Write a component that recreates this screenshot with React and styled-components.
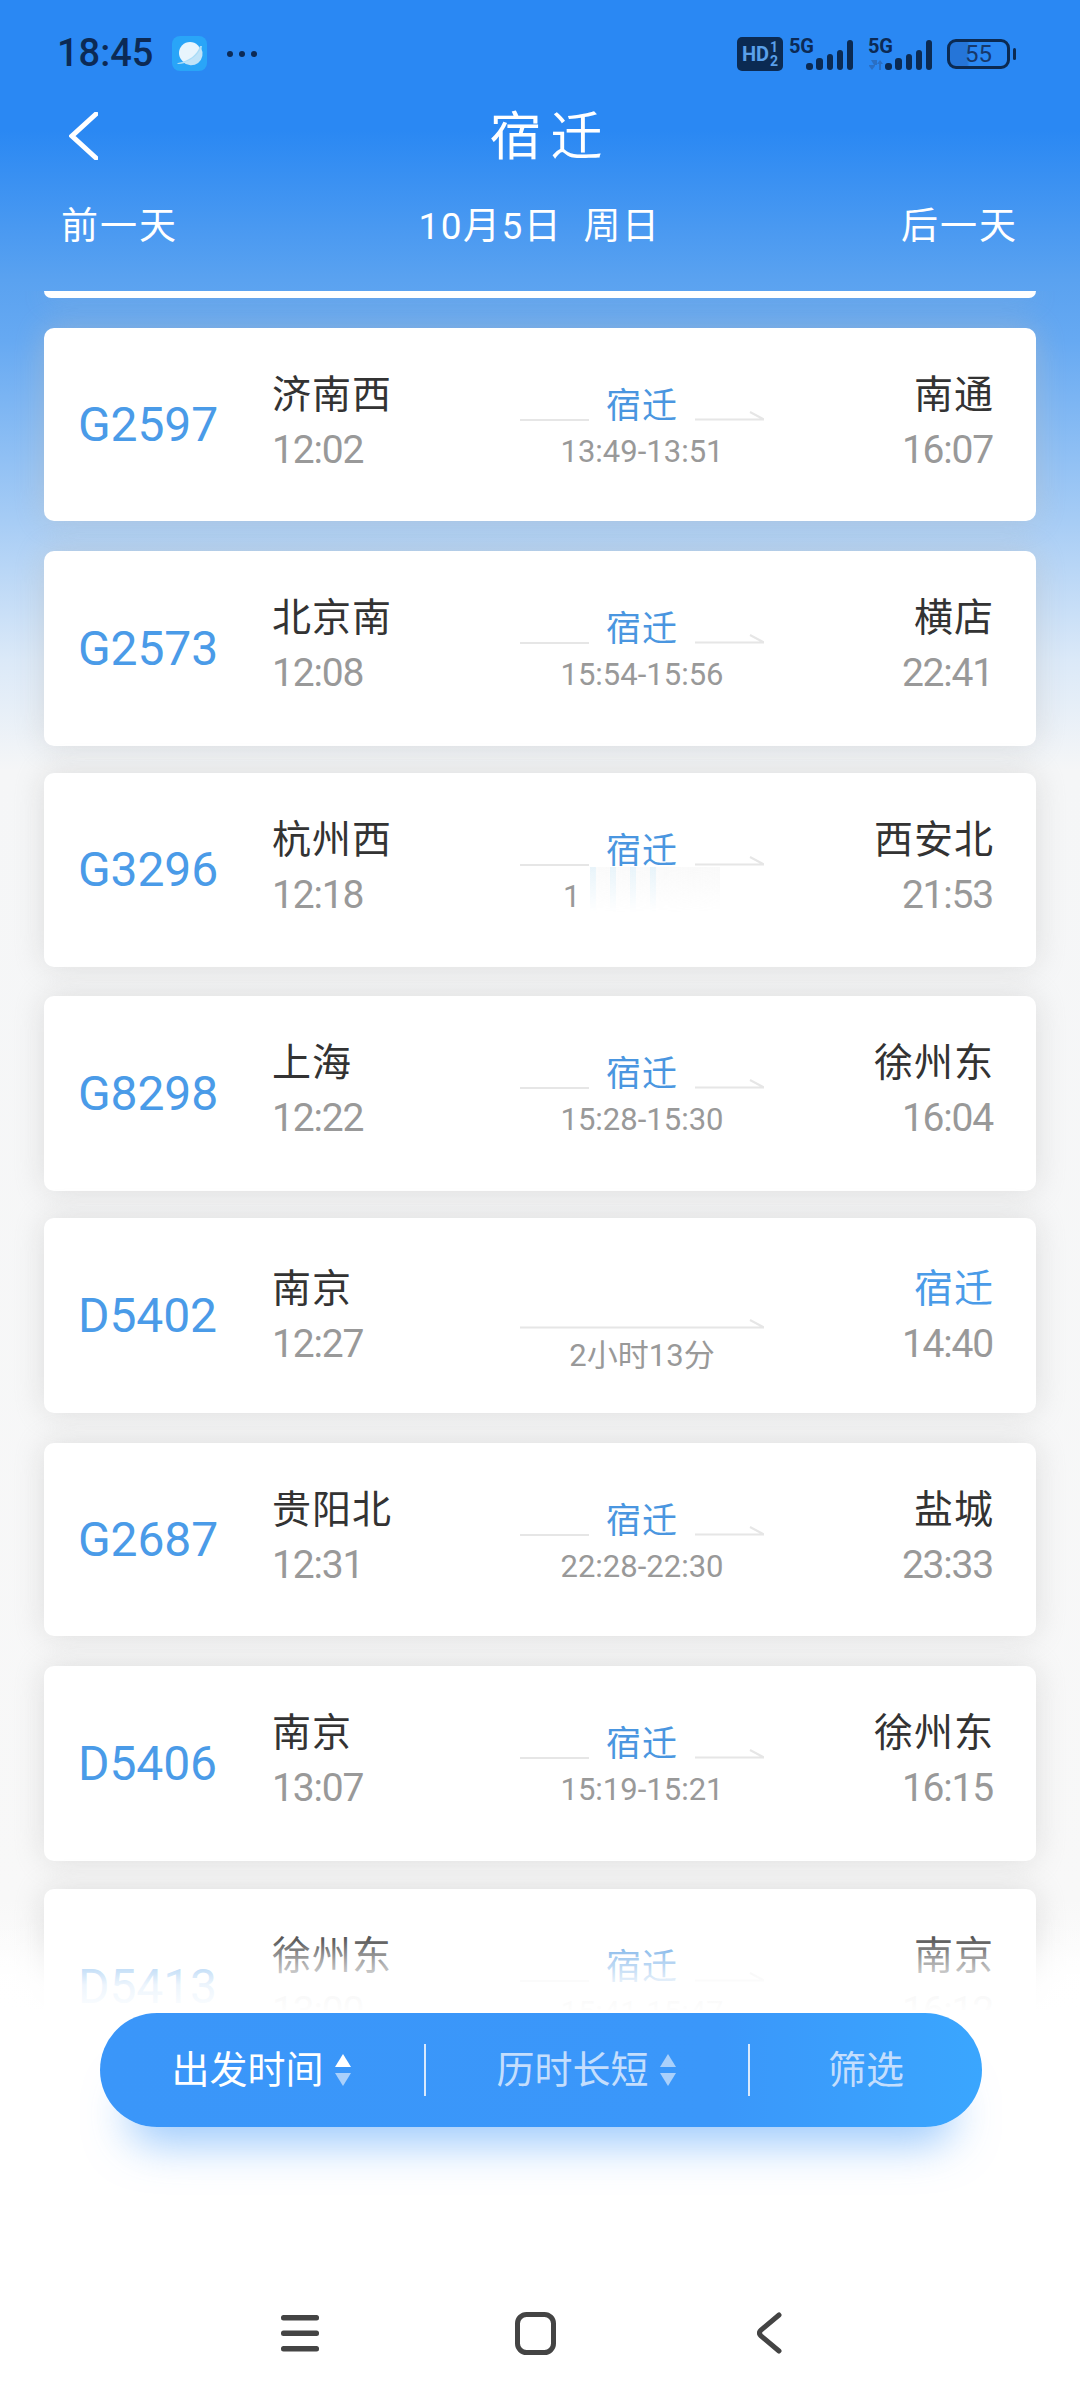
import styled, { createGlobalStyle } from "styled-components";

const FONT = `Roboto, "Noto Sans CJK SC", sans-serif`;

const Global = createGlobalStyle`
  html, body { margin: 0; padding: 0; background: #fff; }
  body { font-family: ${FONT}; }
`;

const Page = styled.div`
  width: 1080px;
  height: 2400px;
  overflow: hidden;
  display: flex;
  flex-direction: column;
  background: linear-gradient(
    to bottom,
    #2a88f3 0,
    #2a88f3 130px,
    #5aa2f0 280px,
    #66a9f2 340px,
    #a6ccf5 520px,
    #dbe9f8 660px,
    #f5f6f7 770px,
    #f8f8f8 1900px,
    #ffffff 2010px
  );
`;

/* status bar */
const StatusBar = styled.div`
  height: 106px;
  padding: 36px 70px 0 57px;
  box-sizing: border-box;
  display: flex;
  justify-content: space-between;
  align-items: flex-start;
  color: #0c2a55;
`;

const StatusLeft = styled.div`
  display: flex;
  align-items: center;
  gap: 19px;
  height: 35px;
`;

const Clock = styled.span`
  font-size: 38px;
  font-weight: 500;
  line-height: 35px;
`;

const StatusRight = styled.div`
  display: flex;
  align-items: flex-start;
`;

const HdBadge = styled.div`
  width: 46px;
  height: 34px;
  margin-top: 1px;
  margin-right: 6px;
  border-radius: 5px;
  background: #0b2a52;
  color: #5aa0ea;
  display: flex;
  align-items: center;
  justify-content: center;
  font-size: 20px;
  font-weight: 700;
`;

const HdFraction = styled.span`
  display: flex;
  flex-direction: column;
  font-size: 14px;
  line-height: 14px;
  margin-left: 1px;
`;

const Signal = styled.div`
  position: relative;
  width: 65px;
  height: 36px;
  margin-right: 14px;
`;

const SignalLabel = styled.span`
  position: absolute;
  left: 0;
  top: 0;
  font-size: 20px;
  font-weight: 700;
  line-height: 20px;
  letter-spacing: -0.3px;
`;

const Battery = styled.div`
  position: relative;
  width: 63px;
  height: 30px;
  margin-top: 3px;
  box-sizing: border-box;
  border: 3px solid #0b2a52;
  border-radius: 9px;
  background: linear-gradient(to right, #2575d8 0, #2575d8 30%, transparent 34%);
  display: flex;
  align-items: center;
  justify-content: center;
  font-size: 24px;
  line-height: 24px;
  color: #16386b;
  &::after {
    content: "";
    position: absolute;
    right: -9px;
    top: 6px;
    width: 3px;
    height: 12px;
    border-radius: 2px;
    background: #0b2a52;
  }
`;

const SignalGraphic = ({ arrows }) => (
  <svg width="65" height="36" viewBox="0 0 65 36">
    <g fill="#0b2a52">
      <rect x="17" y="27" width="7" height="7" rx="3" />
      <rect x="27" y="22" width="7" height="12" rx="3" />
      <rect x="38" y="18" width="6" height="16" rx="3" />
      <rect x="48" y="14" width="6" height="20" rx="3" />
      <rect x="58" y="4" width="6" height="30" rx="3" />
    </g>
    {arrows && (
      <g fill="#2a6fc4">
        <path d="M3 24 h6 v5 h-3 z M1 29 h6 v1 l-3 4 l-3 -4 z" />
        <path d="M12 24 l3 4 h-2 v6 h-2 v-6 h-2 z" />
      </g>
    )}
  </svg>
);

/* title + date */
const TitleBar = styled.div`
  height: 60px;
  padding: 0 0 0 69px;
  display: flex;
  align-items: center;
`;

const Title = styled.h1`
  margin: 3px 63px 0 -14px;
  flex: 1;
  text-align: center;
  color: #fff;
  font-size: 52px;
  font-weight: 400;
  letter-spacing: 9px;
  line-height: 60px;
`;

const DateRow = styled.div`
  height: 125px;
  padding: 38px 62px 0 61px;
  box-sizing: border-box;
  display: flex;
  justify-content: space-between;
  align-items: flex-start;
  color: #fff;
  font-size: 37px;
  line-height: 46px;
  letter-spacing: 2px;
`;

const DateText = styled.span`
  letter-spacing: 1.5px;
  white-space: pre;
`;

/* list */
const List = styled.div`
  position: relative;
  height: 1719px;
  overflow: hidden;
  padding: 0 44px;
  display: flex;
  flex-direction: column;
`;

const CardStub = styled.div`
  height: 7px;
  flex: none;
  background: #fff;
  border-radius: 0 0 8px 8px;
  box-shadow: 0 0 30px rgba(190, 190, 190, 0.45);
  margin-bottom: 30px;
`;

const Card = styled.div`
  flex: none;
  height: ${(p) => p.$height}px;
  margin-bottom: ${(p) => p.$gap}px;
  background: #fff;
  border-radius: 10px;
  box-shadow: 0 0 30px rgba(190, 190, 190, 0.45);
  display: grid;
  grid-template-columns: 193px 248px 244px 228px;
  padding: 0 44px 0 35px;
`;

const TrainNo = styled.div`
  align-self: center;
  color: #4a9be8;
  font-size: 48px;
  line-height: 56px;
  letter-spacing: -0.1px;
  margin-left: -1px;
`;

const Stop = styled.div`
  display: flex;
  flex-direction: column;
  align-items: ${(p) => (p.$right ? "flex-end" : "flex-start")};
  padding-top: ${(p) => (p.$low ? 44 : 40)}px;
`;

const Station = styled.div`
  color: ${(p) => (p.$here ? "#4a9be8" : "#333")};
  font-size: 39px;
  line-height: 54px;
  letter-spacing: 1px;
  margin-right: -2px;
`;

const Time = styled.div`
  color: #999;
  font-size: 39px;
  line-height: 56px;
  letter-spacing: -1.2px;
  margin-right: -1px;
`;

const Middle = styled.div`
  position: relative;
  display: flex;
  flex-direction: column;
  align-items: center;
  padding-top: 57px;
`;

const ViaRow = styled.div`
  display: flex;
  align-items: flex-end;
  width: 100%;
  height: 44px;
  justify-content: space-between;
`;

const ViaName = styled.span`
  color: #4a96e0;
  font-size: 35px;
  line-height: 44px;
  letter-spacing: 1px;
`;

const Rule = styled.span`
  width: 69px;
  height: 2px;
  margin-bottom: 8px;
  background: #e6e6e6;
`;

const ArrowWrap = styled.span`
  width: 69px;
  height: 12px;
  margin-bottom: 8px;
  display: block;
`;

const StopTime = styled.div`
  color: #999;
  font-size: 31px;
  line-height: 46px;
  white-space: nowrap;
`;

const DirectLine = styled.div`
  width: 100%;
  height: 12px;
  margin-top: 42px;
`;

const Duration = styled.div`
  color: #999;
  font-size: 31px;
  line-height: 40px;
  margin-top: 7px;
`;

/* the half-erased time on the G3296 row */
const Smudge = styled.div`
  position: absolute;
  left: 70px;
  top: 94px;
  width: 130px;
  height: 46px;
  background:
    repeating-linear-gradient(to right, rgba(190, 228, 248, 0.3) 0 6px, transparent 6px 20px) 0 0 / 60% 100% no-repeat,
    linear-gradient(to right, rgba(246, 246, 246, 0.5), rgba(248, 248, 248, 0.8));
  -webkit-mask-image: linear-gradient(to bottom, #000, transparent);
  mask-image: linear-gradient(to bottom, #000, transparent);
`;

const LoneDigit = styled.span`
  position: absolute;
  left: 43px;
  top: 101px;
  color: #999;
  font-size: 31px;
  line-height: 46px;
`;

const BottomFade = styled.div`
  position: absolute;
  left: 0;
  right: 0;
  bottom: 0;
  height: 90px;
  background: linear-gradient(
    to bottom,
    rgba(255, 255, 255, 0) 0,
    rgba(255, 255, 255, 0.2) 22%,
    rgba(255, 255, 255, 0.55) 44%,
    rgba(255, 255, 255, 0.9) 72%,
    rgba(255, 255, 255, 0.985) 100%
  );
`;

/* bottom area */
const Dock = styled.div`
  flex: 1;
  background: #fff;
  display: flex;
  flex-direction: column;
  align-items: center;
  padding-top: 3px;
`;

const SortPill = styled.div`
  width: 882px;
  height: 114px;
  margin-left: 2px;
  border-radius: 57px;
  background: linear-gradient(to right, #3a96f9, #3a97fa 70%, #3aa6fe);
  box-shadow: 0 44px 44px -28px rgba(70, 155, 250, 0.55);
  display: grid;
  grid-template-columns: 326px 324px 1fr;
  align-items: center;
`;

const SortItem = styled.div`
  height: 52px;
  display: flex;
  align-items: center;
  justify-content: center;
  gap: 9px;
  color: ${(p) => (p.$active ? "#fff" : "#c4defd")};
  font-size: 38px;
  line-height: 52px;
  border-right: ${(p) => (p.$divider ? "2px solid #d8e9fd" : "none")};
`;

const NavBar = styled.div`
  margin-top: 185px;
  width: 100%;
  height: 44px;
  display: grid;
  grid-template-columns: 281px 38px 196px 41px 201px 25px 1fr;
`;

const SortCaret = ({ upColor, downColor }) => (
  <svg width="20" height="34" viewBox="0 0 20 34">
    <path d="M10 1 L18 14 H2 Z" fill={upColor} />
    <path d="M10 33 L2 20 H18 Z" fill={downColor} />
  </svg>
);

const Chevron = () => (
  <svg width="29" height="48" viewBox="0 0 29 48" fill="none">
    <path d="M27 2 L3 24 L27 46" stroke="#fff" strokeWidth="5" strokeLinecap="round" />
  </svg>
);

const Planet = () => (
  <svg width="35" height="35" viewBox="0 0 35 35">
    <rect width="35" height="35" rx="8" fill="#29a5f8" />
    <circle cx="18" cy="17" r="11" fill="#e8f5fd" />
    <path d="M28 10 C25 19 17 25 6 27 L5 28 C17 28 29 21 30 10 Z" fill="#a9dcf7" />
    <path d="M29 12 A11.5 11.5 0 0 1 11 26 C19 25 26 19 29 12 Z" fill="#bfe3f8" />
  </svg>
);

const Dots = () => (
  <svg width="32" height="8" viewBox="0 0 32 8">
    <circle cx="4" cy="4" r="3" fill="#0c2a55" />
    <circle cx="16" cy="4" r="3" fill="#0c2a55" />
    <circle cx="28" cy="4" r="3" fill="#0c2a55" />
  </svg>
);

const ArrowLine = ({ width }) => (
  <svg width={width} height="12" viewBox={`0 0 ${width} 12`} style={{ display: "block" }}>
    <path d={`M0 10.5 H${width} L${width - 14} 3`} fill="none" stroke="#e6e6e6" strokeWidth="2" />
  </svg>
);

const NavIcons = () => (
  <>
    <span />
    <svg width="38" height="40" viewBox="0 0 38 40">
      <g fill="#444">
        <rect x="0" y="3" width="38" height="5.5" rx="2.5" />
        <rect x="0" y="18.5" width="38" height="5.5" rx="2.5" />
        <rect x="0" y="34" width="38" height="5.5" rx="2.5" />
      </g>
    </svg>
    <span />
    <svg width="41" height="44" viewBox="0 0 41 44" fill="none">
      <rect x="2.5" y="2.5" width="36" height="38" rx="9" stroke="#444" strokeWidth="5" />
    </svg>
    <span />
    <svg width="25" height="44" viewBox="0 0 25 44" fill="none">
      <path d="M22 3 L4 18 Q1 21 4 24 L22 39" stroke="#444" strokeWidth="5" strokeLinecap="round" />
    </svg>
    <span />
  </>
);

const trains = [
  { no: "G2597", from: "济南西", dep: "12:02", stay: "13:49-13:51", to: "南通", arr: "16:07", h: 193, gap: 30 },
  { no: "G2573", from: "北京南", dep: "12:08", stay: "15:54-15:56", to: "横店", arr: "22:41", h: 195, gap: 27 },
  { no: "G3296", from: "杭州西", dep: "12:18", erased: true, to: "西安北", arr: "21:53", h: 194, gap: 29 },
  { no: "G8298", from: "上海", dep: "12:22", stay: "15:28-15:30", to: "徐州东", arr: "16:04", h: 195, gap: 27 },
  { no: "D5402", from: "南京", dep: "12:27", direct: "2小时13分", to: "宿迁", arr: "14:40", h: 195, gap: 30 },
  { no: "G2687", from: "贵阳北", dep: "12:31", stay: "22:28-22:30", to: "盐城", arr: "23:33", h: 193, gap: 30 },
  { no: "D5406", from: "南京", dep: "13:07", stay: "15:19-15:21", to: "徐州东", arr: "16:15", h: 195, gap: 28 },
  { no: "D5413", from: "徐州东", dep: "13:00", stay: "15:41-15:47", to: "南京", arr: "16:12", h: 195, gap: 0 },
];

function TrainCard({ t }) {
  const low = Boolean(t.direct);
  return (
    <Card $height={t.h} $gap={t.gap}>
      <TrainNo>{t.no}</TrainNo>
      <Stop $low={low}>
        <Station>{t.from}</Station>
        <Time>{t.dep}</Time>
      </Stop>
      {t.direct ? (
        <Middle>
          <DirectLine>
            <ArrowLine width={244} />
          </DirectLine>
          <Duration>{t.direct}</Duration>
        </Middle>
      ) : (
        <Middle>
          <ViaRow>
            <Rule />
            <ViaName>宿迁</ViaName>
            <ArrowWrap>
              <ArrowLine width={69} />
            </ArrowWrap>
          </ViaRow>
          {t.stay && <StopTime>{t.stay}</StopTime>}
          {t.erased && (
            <>
              <Smudge />
              <LoneDigit>1</LoneDigit>
            </>
          )}
        </Middle>
      )}
      <Stop $right $low={low}>
        <Station $here={t.to === "宿迁"}>{t.to}</Station>
        <Time>{t.arr}</Time>
      </Stop>
    </Card>
  );
}

export default function App() {
  return (
    <Page>
      <Global />
      <StatusBar>
        <StatusLeft>
          <Clock>18:45</Clock>
          <Planet />
          <Dots />
        </StatusLeft>
        <StatusRight>
          <HdBadge>
            HD
            <HdFraction>
              <span>1</span>
              <span>2</span>
            </HdFraction>
          </HdBadge>
          <Signal>
            <SignalLabel>5G</SignalLabel>
            <SignalGraphic />
          </Signal>
          <Signal>
            <SignalLabel>5G</SignalLabel>
            <SignalGraphic arrows />
          </Signal>
          <Battery>55</Battery>
        </StatusRight>
      </StatusBar>
      <TitleBar>
        <Chevron />
        <Title>宿迁</Title>
      </TitleBar>
      <DateRow>
        <span>前一天</span>
        <DateText>10月5日  周日</DateText>
        <span>后一天</span>
      </DateRow>
      <List>
        <CardStub />
        {trains.map((t) => (
          <TrainCard key={t.no} t={t} />
        ))}
        <BottomFade />
      </List>
      <Dock>
        <SortPill>
          <SortItem $active $divider>
            出发时间
            <SortCaret upColor="#fff" downColor="#a9d0fb" />
          </SortItem>
          <SortItem $divider>
            历时长短
            <SortCaret upColor="#a9d0fb" downColor="#a9d0fb" />
          </SortItem>
          <SortItem>筛选</SortItem>
        </SortPill>
        <NavBar>
          <NavIcons />
        </NavBar>
      </Dock>
    </Page>
  );
}
